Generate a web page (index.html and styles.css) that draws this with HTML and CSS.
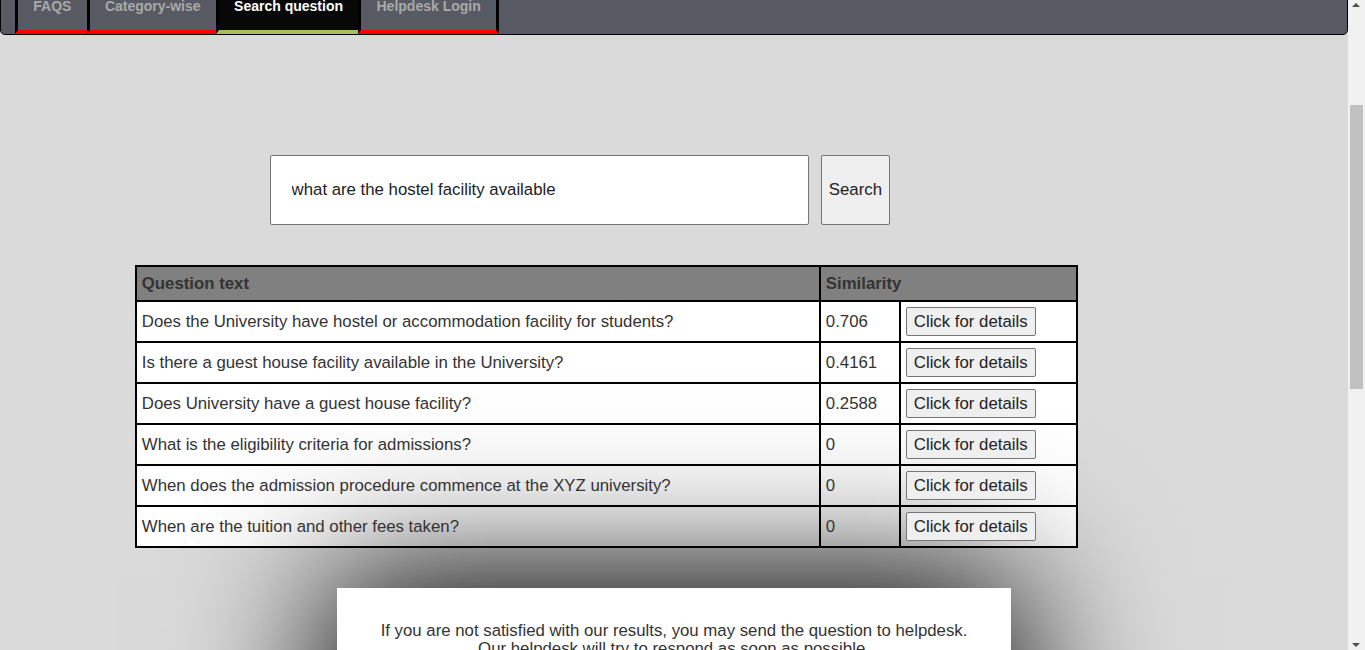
FILE: index.html
```html
<!DOCTYPE html>
<html lang="en">
<head>
<meta charset="utf-8">
<title>Search question</title>
<link rel="stylesheet" href="styles.css">
</head>
<body>
<nav class="topbar">
  <a class="tab" href="#">FAQS</a>
  <a class="tab" href="#">Category-wise</a>
  <a class="tab active" href="#">Search question</a>
  <a class="tab last" href="#">Helpdesk Login</a>
</nav>
<div class="scrollbar" aria-hidden="true">
  <span class="arrow up"></span>
  <span class="thumb"></span>
  <span class="arrow down"></span>
</div>
<main class="page">
  <form class="search-form">
    <input class="search-input" type="text" value="what are the hostel facility available">
    <button class="search-btn" type="button">Search</button>
  </form>
  <table class="results">
    <colgroup>
      <col class="col-q">
      <col class="col-s">
      <col class="col-b">
    </colgroup>
    <thead>
      <tr><th>Question text</th><th colspan="2">Similarity</th></tr>
    </thead>
    <tbody>
      <tr><td>Does the University have hostel or accommodation facility for students?</td><td>0.706</td><td><button class="details" type="button">Click for details</button></td></tr>
      <tr><td>Is there a guest house facility available in the University?</td><td>0.4161</td><td><button class="details" type="button">Click for details</button></td></tr>
      <tr><td>Does University have a guest house facility?</td><td>0.2588</td><td><button class="details" type="button">Click for details</button></td></tr>
      <tr><td>What is the eligibility criteria for admissions?</td><td>0</td><td><button class="details" type="button">Click for details</button></td></tr>
      <tr><td>When does the admission procedure commence at the XYZ university?</td><td>0</td><td><button class="details" type="button">Click for details</button></td></tr>
      <tr><td>When are the tuition and other fees taken?</td><td>0</td><td><button class="details" type="button">Click for details</button></td></tr>
    </tbody>
  </table>
  <section class="helpdesk">
    <p class="helpdesk-text">If you are not satisfied with our results, you may send the question to helpdesk.<br>Our helpdesk will try to respond as soon as possible.</p>
  </section>
</main>
</body>
</html>
```

FILE: styles.css
```css
body {
  margin: 0 17px 0 0;
  background: #dadada;
  font-family: "Liberation Sans", Arial, sans-serif;
  color: #333;
}
.topbar {
  position: fixed;
  top: -20px;
  left: 0;
  right: 17px;
  z-index: 10;
  display: flex;
  padding-left: 14px;
  background: #575a62;
  border: 1px solid #000;
  border-radius: 0 0 5px 5px;
}
.tab {
  display: block;
  padding: 17px 15.25px 16px;
  font-size: 14px;
  line-height: 16px;
  font-weight: bold;
  color: #a9a9a9;
  text-decoration: none;
  border-left: 3px solid #000;
  border-bottom: 4px solid #ff0000;
}
.tab.active {
  background: #080808;
  color: #fff;
  border-bottom-color: #a9bd5a;
}
.tab.last {
  border-right: 3px solid #000;
}
.scrollbar {
  position: fixed;
  top: 0;
  right: 0;
  bottom: 0;
  z-index: 20;
  width: 17px;
  background: #f1f1f1;
}
.thumb {
  position: absolute;
  top: 105px;
  left: 2px;
  width: 13px;
  height: 284px;
  background: #c1c1c1;
}
.arrow {
  position: absolute;
  left: 4px;
  width: 0;
  height: 0;
  border-left: 4px solid transparent;
  border-right: 4px solid transparent;
}
.arrow.up {
  top: 3px;
  border-bottom: 4px solid #505050;
}
.arrow.down {
  bottom: 3px;
  border-top: 4px solid #505050;
}
.page {
  padding-top: 155px;
  padding-bottom: 62px;
}
.search-form {
  display: flex;
  gap: 12px;
  margin: 0 0 0 20%;
  height: 70px;
}
.search-input {
  box-sizing: border-box;
  flex: 0 0 50%;
  height: 70px;
  margin: 0;
  padding: 0 21px;
  border: 1px solid #767676;
  border-radius: 2px;
  background: #fff;
  font-family: "Liberation Sans", Arial, sans-serif;
  font-size: 16.8px;
  color: #222;
}
.search-btn {
  height: 70px;
  margin: 0;
  padding: 0 7px;
  border: 1px solid #767676;
  border-radius: 2px;
  background: #efefef;
  font-family: "Liberation Sans", Arial, sans-serif;
  font-size: 16.8px;
  color: #222;
}
.results {
  margin: 40px 0 0 10%;
  width: 70%;
  border-collapse: collapse;
  table-layout: fixed;
  border: 2px solid #000;
  font-size: 16.8px;
}
.col-q { width: 684px; }
.col-s { width: 80px; }
.results th,
.results td {
  border: 2px solid #000;
  text-align: left;
  line-height: 19px;
}
.results th {
  background: #808080;
  padding: 7px 5px;
  font-weight: bold;
  color: #333;
}
.results td {
  background: #fff;
  padding: 5px 5px;
  color: #333;
}
.details {
  margin: 0;
  padding: 4px 7px;
  line-height: 19px;
  border: 1px solid #767676;
  border-radius: 2px;
  background: #efefef;
  font-family: "Liberation Sans", Arial, sans-serif;
  font-size: 16.8px;
  color: #222;
}
.helpdesk {
  width: 50%;
  height: 560px;
  margin: 40px auto 0;
  background: #fff;
  box-shadow: 0 0 140px 10px #000;
  overflow: hidden;
}
.helpdesk-text {
  margin: 0;
  padding-top: 34px;
  text-align: center;
  font-size: 16.8px;
  line-height: 18px;
  color: #333;
}
```
